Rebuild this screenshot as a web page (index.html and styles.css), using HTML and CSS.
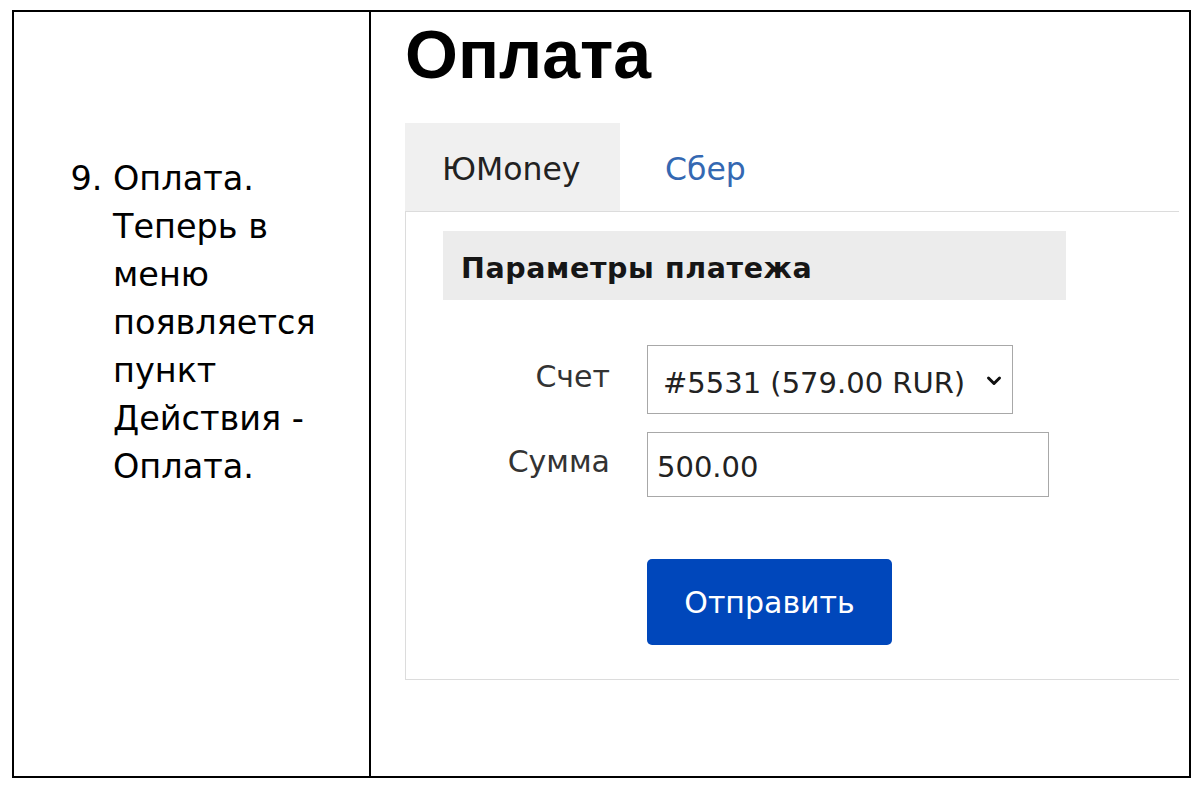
FILE: index.html
```html
<!DOCTYPE html>
<html lang="ru">
<head>
<meta charset="utf-8">
<title>Оплата</title>
<link rel="stylesheet" href="styles.css">
</head>
<body>
<div class="sheet">
  <div class="cell cell-text">
    <ol class="steps" start="9">
      <li>Оплата. Теперь в меню появляется пункт Действия - Оплата.</li>
    </ol>
  </div>
  <div class="cell cell-shot">
    <h1 class="title">Оплата</h1>
    <div class="tabs">
      <div class="tab tab-active">ЮMoney</div>
      <div class="tab tab-link">Сбер</div>
    </div>
    <div class="panel">
      <div class="section">Параметры платежа</div>
      <div class="form">
        <div class="label">Счет</div>
        <div class="control select">
          <span>#5531 (579.00 RUR)</span>
          <svg class="chevron" width="16" height="11" viewBox="0 0 16 11"><path d="M2.5 3 L8 8.5 L13.5 3" fill="none" stroke="#111" stroke-width="3" stroke-linecap="round" stroke-linejoin="round"/></svg>
        </div>
        <div class="label">Сумма</div>
        <div class="control input">500.00</div>
        <div class="spacer"></div>
        <button class="btn" type="button">Отправить</button>
      </div>
    </div>
  </div>
</div>
</body>
</html>
```

FILE: styles.css
```css
html, body {
  margin: 0;
  padding: 0;
  background: #fff;
}

.sheet {
  display: flex;
  box-sizing: border-box;
  margin: 10px 0 0 12px;
  width: 1179px;
  height: 768px;
  border: 2px solid #000;
}

.cell-text {
  box-sizing: border-box;
  width: 357px;
  flex: none;
  border-right: 2px solid #000;
  padding: 143px 36px 0 0;
}

.steps {
  margin: 0;
  padding-left: 99px;
  font-family: "DejaVu Sans", Verdana, sans-serif;
  font-size: 33.5px;
  line-height: 48px;
  color: #000;
}

.cell-shot {
  flex: 1;
  min-width: 0;
  padding: 0 10px 0 34px;
}

.title {
  margin: 7px 0 0;
  font-family: "Liberation Sans", Arial, sans-serif;
  font-weight: bold;
  font-size: 68px;
  line-height: 70px;
  color: #000;
}

.tabs {
  display: flex;
  margin-top: 34px;
}

.tab {
  box-sizing: border-box;
  height: 88px;
  padding-top: 4px;
  font-family: "DejaVu Sans", Verdana, sans-serif;
  font-size: 31.5px;
  line-height: 84px;
}

.tab-active {
  width: 215px;
  padding-left: 37px;
  background: #f0f0f0;
  color: #222;
}

.tab-link {
  padding-left: 45px;
  color: #3468b2;
}

.panel {
  border: 1px solid #dcdcdc;
  border-right: none;
  padding: 19px 0 34px 37px;
}

.section {
  box-sizing: border-box;
  width: 623px;
  height: 69px;
  padding-left: 18px;
  background: #ececec;
  font-family: "DejaVu Sans", Verdana, sans-serif;
  font-weight: bold;
  font-size: 28.5px;
  letter-spacing: 0.6px;
  line-height: 75px;
  color: #161616;
}

.form {
  display: grid;
  grid-template-columns: 204px 1fr;
  row-gap: 18px;
  justify-items: start;
  align-items: center;
  margin-top: 45px;
  font-family: "DejaVu Sans", Verdana, sans-serif;
  font-size: 29px;
}

.label {
  justify-self: stretch;
  text-align: right;
  padding: 0 37px 6px 0;
  font-size: 30px;
  line-height: 34px;
  color: #333;
}

.control {
  box-sizing: border-box;
  display: flex;
  align-items: center;
  border: 1px solid #a8a8a8;
  color: #222;
  background: #fff;
}

.select {
  width: 366px;
  height: 69px;
  padding: 6px 10px 0 15px;
  justify-content: space-between;
}

.chevron {
  margin-bottom: 4px;
}

.input {
  width: 402px;
  height: 65px;
  padding: 4px 0 0 9px;
}

.btn {
  margin-top: 44px;
  width: 245px;
  height: 86px;
  border: none;
  border-radius: 5px;
  background: #0047bb;
  color: #fff;
  font-family: "DejaVu Sans", Verdana, sans-serif;
  font-size: 30px;
  padding: 0;
}
```
